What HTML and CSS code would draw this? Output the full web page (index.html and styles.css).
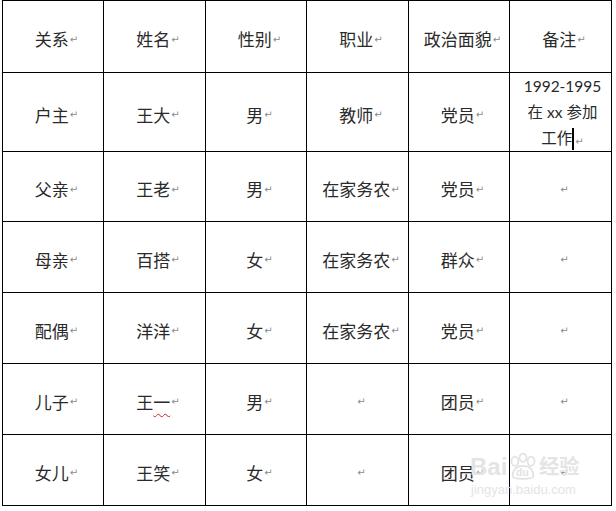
FILE: index.html
```html
<!DOCTYPE html>
<html lang="zh-CN">
<head>
<meta charset="utf-8">
<title>家庭成员</title>
<link rel="stylesheet" href="styles.css">
</head>
<body>
<div class="page">
  <div class="table">
    <div class="cell">关系<span class="pm">↵</span></div>
    <div class="cell">姓名<span class="pm">↵</span></div>
    <div class="cell">性别<span class="pm">↵</span></div>
    <div class="cell">职业<span class="pm">↵</span></div>
    <div class="cell">政治面貌<span class="pm">↵</span></div>
    <div class="cell">备注<span class="pm">↵</span></div>

    <div class="cell">户主<span class="pm">↵</span></div>
    <div class="cell">王大<span class="pm">↵</span></div>
    <div class="cell">男<span class="pm">↵</span></div>
    <div class="cell">教师<span class="pm">↵</span></div>
    <div class="cell">党员<span class="pm">↵</span></div>
    <div class="cell note"><span class="note-text">1992-1995<br>在 xx 参加<br>工作<span class="caret"></span><span class="pm">↵</span></span></div>

    <div class="cell">父亲<span class="pm">↵</span></div>
    <div class="cell">王老<span class="pm">↵</span></div>
    <div class="cell">男<span class="pm">↵</span></div>
    <div class="cell">在家务农<span class="pm">↵</span></div>
    <div class="cell">党员<span class="pm">↵</span></div>
    <div class="cell"><span class="pm">↵</span></div>

    <div class="cell">母亲<span class="pm">↵</span></div>
    <div class="cell">百搭<span class="pm">↵</span></div>
    <div class="cell">女<span class="pm">↵</span></div>
    <div class="cell">在家务农<span class="pm">↵</span></div>
    <div class="cell">群众<span class="pm">↵</span></div>
    <div class="cell"><span class="pm">↵</span></div>

    <div class="cell">配偶<span class="pm">↵</span></div>
    <div class="cell">洋洋<span class="pm">↵</span></div>
    <div class="cell">女<span class="pm">↵</span></div>
    <div class="cell">在家务农<span class="pm">↵</span></div>
    <div class="cell">党员<span class="pm">↵</span></div>
    <div class="cell"><span class="pm">↵</span></div>

    <div class="cell">儿子<span class="pm">↵</span></div>
    <div class="cell">王<span class="spell">一</span><span class="pm">↵</span></div>
    <div class="cell">男<span class="pm">↵</span></div>
    <div class="cell"><span class="pm">↵</span></div>
    <div class="cell">团员<span class="pm">↵</span></div>
    <div class="cell"><span class="pm">↵</span></div>

    <div class="cell">女儿<span class="pm">↵</span></div>
    <div class="cell">王笑<span class="pm">↵</span></div>
    <div class="cell">女<span class="pm">↵</span></div>
    <div class="cell"><span class="pm">↵</span></div>
    <div class="cell">团员<span class="pm">↵</span></div>
    <div class="cell"><span class="pm">↵</span></div>
  </div>
  <div class="watermark">
    <div class="wm-logo">
      <span>Bai</span>
      <svg class="paw" width="30" height="28" viewBox="0 0 26 24">
        <g fill="none" stroke="#e2e2e2" stroke-width="1.5">
          <ellipse cx="6" cy="7" rx="3" ry="4"/>
          <ellipse cx="13" cy="4" rx="3" ry="3.5"/>
          <ellipse cx="20" cy="7" rx="3" ry="4"/>
          <path d="M4 20 C4 13 9 11 13 11 C17 11 22 13 22 20 C22 23 4 23 4 20 Z"/>
        </g>
        <text x="7" y="20" font-size="9" fill="#e2e2e2" font-family="Liberation Sans, sans-serif" font-weight="bold">du</text>
      </svg>
      <span class="wm-cn">经验</span>
    </div>
    <div class="wm-url">jingyan.baidu.com</div>
  </div>
</div>
</body>
</html>
```
FILE: styles.css
```css
html, body {
  margin: 0;
  padding: 0;
  background: #ffffff;
}

.page {
  position: relative;
  width: 616px;
  height: 511px;
  overflow: hidden;
  background: #ffffff;
}

.table {
  margin-left: 2px;
  display: grid;
  grid-template-columns: 100px 101px 100px 101px 100px 101px;
  grid-template-rows: 71px 78px 69px 70px 70px 70px 70px;
  gap: 1px;
  padding: 1px;
  background: #000000;
  width: max-content;
}

.cell {
  background: #ffffff;
  display: flex;
  align-items: center;
  justify-content: center;
  padding: 4px 0 0 7px;
  font-family: "Noto Sans CJK SC", "Noto Sans", sans-serif;
  font-size: 17px;
  color: #2a2a2a;
  line-height: 1;
}

.pm {
  font-family: "DejaVu Sans", sans-serif;
  font-size: 10px;
  color: #8a8a8a;
  margin-left: 1px;
  position: relative;
  top: 1px;
}

.note {
  padding: 2px 0 0 4px;
}

.note-text {
  text-align: center;
  font-family: "Lato", "Noto Sans CJK SC", sans-serif;
  font-size: 15.5px;
  line-height: 26px;
}

.caret {
  display: inline-block;
  width: 2px;
  height: 22px;
  background: #000;
  vertical-align: -6px;
}

.spell {
  text-decoration: underline wavy #d02020;
  text-decoration-thickness: 1px;
  text-underline-offset: 4px;
}

.watermark {
  position: absolute;
  left: 470px;
  top: 452px;
  color: #e4e4e4;
  font-family: "Liberation Sans", "Noto Sans CJK SC", sans-serif;
  white-space: nowrap;
  pointer-events: none;
}

.wm-logo {
  display: flex;
  align-items: center;
  gap: 1px;
  font-size: 24px;
  font-weight: bold;
  line-height: 30px;
}

.wm-cn {
  font-size: 20px;
}

.wm-url {
  font-size: 13px;
  line-height: 15px;
  margin-left: 1px;
}
```
